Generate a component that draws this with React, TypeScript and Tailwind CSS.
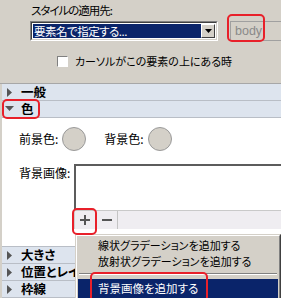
import React from 'react';

const font = "font-['Noto_Sans_CJK_JP','Noto_Sans',sans-serif] [font-feature-settings:'palt']";

const RightTri = () => (
  <svg width="6" height="9" viewBox="0 0 6 9" className="shrink-0">
    <path d="M0 0 L5 4.5 L0 9 Z" fill="#555" />
  </svg>
);

const DownTri = () => (
  <svg width="9" height="6" viewBox="0 0 9 6" className="shrink-0">
    <path d="M0 0 L9 0 L4.5 5 Z" fill="#555" />
  </svg>
);

const Section: React.FC<{ title: string; open?: boolean }> = ({ title, open }) => (
  <div className="h-[17px] flex items-center bg-[#dde4ee] border-b border-[#b9bec6]">
    <div className={open ? 'w-[19px] pl-[3px] flex items-center' : 'w-[19px] pl-[5px] flex items-center'}>
      {open ? <DownTri /> : <RightTri />}
    </div>
    <span className="text-[12.5px] font-bold leading-[16px] text-black whitespace-nowrap">{title}</span>
  </div>
);

const Mark: React.FC<{ className: string }> = ({ className }) => (
  <div className={`absolute border-2 border-[#e8202a] rounded-[5px] pointer-events-none ${className}`} />
);

const App: React.FC = () => {
  return (
    <div className={`relative w-[281px] h-[298px] overflow-hidden bg-[#d4d0c8] text-[12px] text-black ${font}`}>
      {/* Target selection */}
      <div className="h-[84px] pt-[3px] border-b border-[#a7a7a7]">
        <div className="pl-[31px] leading-[14px] text-[11.5px] tracking-[-1px]">スタイルの適用先:</div>
        <div className="mt-[4px] flex items-center">
          <div className="ml-[30px] w-[188px] h-[20px] flex border border-t-[#808080] border-l-[#808080] border-r-white border-b-white">
            <div className="flex-1 flex border border-t-[#404040] border-l-[#404040] border-r-[#d4d0c8] border-b-[#d4d0c8] bg-white p-[1px]">
              <div className="flex-1 bg-[#0a246a] text-white leading-[14px] pl-[1px] text-[11.5px] tracking-[-0.5px] whitespace-nowrap overflow-hidden">
                要素名で指定する...
              </div>
              <div className="w-[14px] bg-[#d4d0c8] border border-t-white border-l-white border-r-[#404040] border-b-[#404040] flex items-center justify-center">
                <svg width="7" height="4" viewBox="0 0 7 4">
                  <path d="M0 0 L7 0 L3.5 4 Z" fill="#000" />
                </svg>
              </div>
            </div>
          </div>
          <div className="ml-[12px] flex-1 h-[20px] border border-[#a0a0a0] border-r-0 pl-[4px] leading-[18px] text-[#8a8a8a] font-['Liberation_Sans',sans-serif] text-[12.5px]">
            body
          </div>
        </div>
        <div className="mt-[14px] pl-[57px] flex items-center gap-[7px]">
          <div className="w-[11px] h-[11px] bg-white border border-t-[#808080] border-l-[#808080] border-r-white border-b-white" />
          <span className="leading-[13px] text-[11px]">カーソルがこの要素の上にある時</span>
        </div>
      </div>

      {/* Property sections */}
      <div className="border-l-2 border-[#d4d0c8]">
        <Section title="一般" />
        <Section title="色" open />
        <div className="h-[128px] bg-white">
          <div className="pt-[9px] flex items-center pl-[17px]">
            <span>前景色:</span>
            <div className="ml-[4px] w-[24px] h-[24px] rounded-full bg-[#d4d0c8] border border-[#9a9a9a]" />
            <span className="ml-[18px]">背景色:</span>
            <div className="ml-[4px] w-[24px] h-[24px] rounded-full bg-[#d4d0c8] border border-[#9a9a9a]" />
          </div>
          <div className="mt-[13px] flex">
            <span className="w-[72px] pl-[17px] pt-[2px] leading-[14px] whitespace-nowrap">背景画像:</span>
            <div className="flex-1">
              <div className="h-[46px] bg-white border-t-2 border-l-2 border-[#5c5c5c]" />
              <div className="h-[19px] bg-[#efedf1] border-t border-[#c9c9c9] border-l border-l-[#d0d0d0] flex">
                <div className="w-[21px] flex items-center justify-center border-r border-[#dcdadf]">
                  <svg width="10" height="10" viewBox="0 0 10 10">
                    <path d="M4 0h2v4h4v2H6v4H4V6H0V4h4z" fill="#555" />
                  </svg>
                </div>
                <div className="w-[22px] flex items-center justify-center border-r border-[#c4c4c4]">
                  <svg width="10" height="2" viewBox="0 0 10 2">
                    <rect width="10" height="2" fill="#555" />
                  </svg>
                </div>
              </div>
            </div>
          </div>
        </div>
        <div className="border-t border-[#b9bec6]">
          <Section title="大きさ" />
          <Section title="位置とレイアウト" />
          <Section title="枠線" />
          <Section title="影" />
        </div>
      </div>

      {/* Popup menu */}
      <div className="absolute left-[75px] top-[234px] w-[206px] h-[70px] bg-[#d4d0c8] border border-t-[#d4d0c8] border-l-[#d4d0c8] border-r-[#404040] border-b-[#404040]">
        <div className="h-full border border-t-white border-l-white border-r-[#808080] border-b-[#808080] pt-[1px] px-[1px]">
          <div className="h-[16px] pl-[20px] leading-[16px] text-[11px] whitespace-nowrap">線状グラデーションを追加する</div>
          <div className="h-[16px] pl-[20px] leading-[16px] text-[11px] whitespace-nowrap">放射状グラデーションを追加する</div>
          <div className="my-[4px] mx-[1px] border-t border-[#808080] border-b border-b-white" />
          <div className="h-[20px] pl-[20px] leading-[18px] text-[11.5px] bg-[#0a246a] text-white whitespace-nowrap">背景画像を追加する</div>
        </div>
      </div>

      {/* Annotations */}
      <Mark className="left-[227px] top-[14px] w-[38px] h-[28px]" />
      <Mark className="left-[2px] top-[99px] w-[38px] h-[20px]" />
      <Mark className="left-[72px] top-[208px] w-[25px] h-[27px]" />
      <Mark className="left-[90px] top-[272px] w-[118px] h-[30px]" />
    </div>
  );
};

export default App;
